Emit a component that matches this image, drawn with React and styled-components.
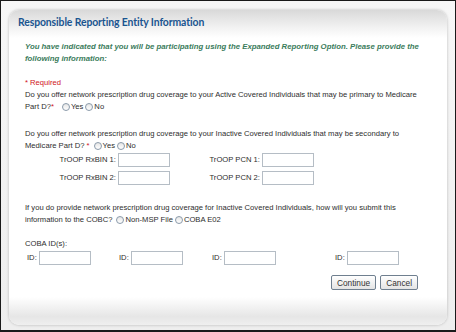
import React from 'react';
import styled, { createGlobalStyle } from 'styled-components';

const GlobalStyle = createGlobalStyle`
  html, body {
    margin: 0;
    padding: 0;
    background: #ffffff;
  }
  * {
    box-sizing: border-box;
  }
`;

const App = () => {
  return (
    <>
      <GlobalStyle />
      <Frame>
        <Panel>
          <Header>
            <Title>Responsible Reporting Entity Information</Title>
          </Header>
          <Body>
            <Intro>
              You have indicated that you will be participating using the Expanded Reporting Option. Please provide the
              <br />
              following information:
            </Intro>

            <Required>* Required</Required>
            <Question>
              Do you offer network prescription drug coverage to your Active Covered Individuals that may be primary to Medicare
              <br />
              Part D?<Star>*</Star>
              <RadioGroup $gap={6}>
                <Radio name="primary" /> Yes
                <Radio name="primary" /> No
              </RadioGroup>
            </Question>

            <Question $top={15}>
              Do you offer network prescription drug coverage to your Inactive Covered Individuals that may be secondary to
              <br />
              Medicare Part D? <Star>*</Star>
              <RadioGroup>
                <Radio name="secondary" /> Yes
                <Radio name="secondary" /> No
              </RadioGroup>
            </Question>

            <TroopGrid>
              <FieldLabel>TrOOP RxBIN 1:</FieldLabel>
              <TextBox />
              <FieldLabel>TrOOP PCN 1:</FieldLabel>
              <TextBox />
              <FieldLabel>TrOOP RxBIN 2:</FieldLabel>
              <TextBox />
              <FieldLabel>TrOOP PCN 2:</FieldLabel>
              <TextBox />
            </TroopGrid>

            <Question $top={17}>
              If you do provide network prescription drug coverage for Inactive Covered Individuals, how will you submit this
              <br />
              information to the COBC?
              <RadioGroup>
                <Radio name="submit" /> Non-MSP File
                <Radio name="submit" /> COBA E02
              </RadioGroup>
            </Question>

            <CobaLabel>COBA ID(s):</CobaLabel>
            <IdRow>
              {[0, 1, 2, 3].map((i) => (
                <IdCell key={i}>
                  ID: <TextBox />
                </IdCell>
              ))}
            </IdRow>

            <Actions>
              <Button type="button">Continue</Button>
              <Button type="button">Cancel</Button>
            </Actions>
          </Body>
          <Footer />
        </Panel>
      </Frame>
    </>
  );
};

const Frame = styled.div`
  width: 456px;
  height: 332px;
  border: 1px solid #1a1a1a;
  border-bottom-width: 2px;
  background: linear-gradient(#f7f7f7, #eeeeee);
  padding: 9px 8px 5px 8px;
  font-family: "Liberation Sans", Arial, sans-serif;
  font-size: 7.65px;
  color: #2e2e2e;
`;

const Panel = styled.div`
  height: 100%;
  background: #ffffff;
  border-radius: 10px;
  box-shadow: 0 0 3px rgba(0, 0, 0, 0.25);
  overflow: hidden;
  display: flex;
  flex-direction: column;
`;

const Header = styled.div`
  height: 28px;
  background: linear-gradient(#d9d9d9, #f1f1f1 60%, #ffffff);
  padding: 6px 0 0 9px;
`;

const Title = styled.h1`
  margin: 0;
  font-family: Lato, "Open Sans", sans-serif;
  font-size: 10.4px;
  font-weight: 700;
  letter-spacing: -0.1px;
  color: #1a5590;
`;

const Body = styled.div`
  flex: 1;
  padding: 3px 20px 0 16px;
  line-height: 12px;
  white-space: nowrap;
`;

const Intro = styled.p`
  margin: 0 0 12px 0;
  font-weight: bold;
  font-style: italic;
  font-size: 7.8px;
  color: #3b7c5c;
  line-height: 12px;
`;

const Required = styled.div`
  color: #d0141b;
  margin-top: 1px;
`;

const Question = styled.div`
  margin-top: ${(p) => p.$top || 0}px;
`;

const Star = styled.span`
  color: #d0141b;
`;

const RadioGroup = styled.span`
  display: inline-flex;
  align-items: center;
  margin-left: ${(p) => p.$gap || 2}px;
  vertical-align: top;
  height: 12px;
`;

const Radio = styled.input.attrs({ type: 'radio' })`
  appearance: none;
  width: 8px;
  height: 8px;
  margin: 0 1px 0 2px;
  border: 1px solid #8a9aaa;
  border-radius: 50%;
  background: linear-gradient(#e6e6e6, #ffffff);
`;

const TroopGrid = styled.div`
  display: grid;
  grid-template-columns: 93px 52px 92px 52px;
  row-gap: 4px;
  align-items: center;
  margin-top: 1px;
`;

const FieldLabel = styled.span`
  text-align: right;
  padding-right: 2px;
`;

const TextBox = styled.input.attrs({ type: 'text' })`
  width: 52px;
  height: 14px;
  margin: 0;
  border: 1px solid #b5bdc5;
  background: #ffffff;
  font-size: 8px;
`;

const CobaLabel = styled.div`
  margin-top: 12px;
`;

const IdRow = styled.div`
  display: grid;
  grid-template-columns: 92px 93px 123px auto;
  padding-left: 2px;
  margin-top: 1px;
`;

const IdCell = styled.div`
  display: flex;
  align-items: center;
  gap: 2px;
`;

const Actions = styled.div`
  display: flex;
  justify-content: flex-end;
  gap: 4px;
  margin-top: 10px;
  padding-right: 9px;
`;

const Button = styled.button`
  height: 15px;
  padding: 0 5px;
  border: 1px solid #6f7f8f;
  border-radius: 2px;
  background: linear-gradient(#ffffff, #e4e4e4);
  font-family: "Liberation Sans", Arial, sans-serif;
  font-size: 8.3px;
  color: #333333;
`;

const Footer = styled.div`
  height: 28px;
  background: linear-gradient(#ffffff, #e6e6e6 70%, #efefef);
`;

export default App;
